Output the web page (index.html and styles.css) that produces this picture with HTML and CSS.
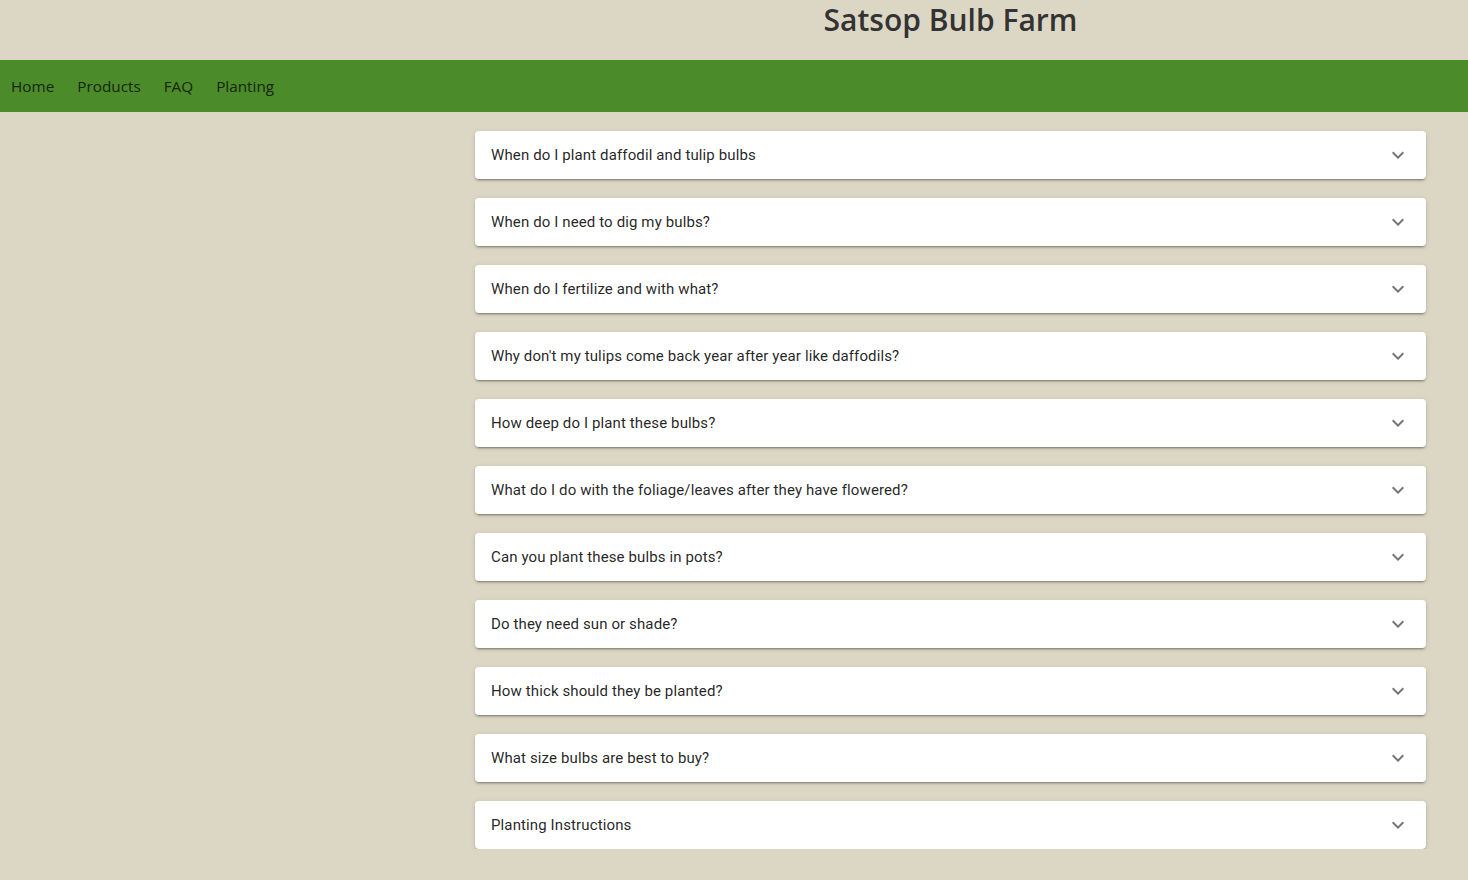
FILE: index.html
```html
<!DOCTYPE html>
<html lang="en">
<head>
<meta charset="utf-8">
<title>Satsop Bulb Farm - FAQ</title>
<link rel="stylesheet" href="styles.css">
</head>
<body>
<header class="site-header">
  <div class="header-spacer"></div>
  <h1 class="site-title">Satsop Bulb Farm</h1>
</header>
<nav class="main-nav">
  <a href="#" class="nav-link">Home</a>
  <a href="#" class="nav-link">Products</a>
  <a href="#" class="nav-link">FAQ</a>
  <a href="#" class="nav-link">Planting</a>
</nav>
<main class="layout">
  <aside class="sidebar"></aside>
  <section class="faq-list">
    <div class="panel"><span class="panel-title">When do I plant daffodil and tulip bulbs</span><svg class="chev" viewBox="0 0 24 24"><path d="M16.59 8.59L12 13.17 7.41 8.59 6 10l6 6 6-6z"/></svg></div>
    <div class="panel"><span class="panel-title">When do I need to dig my bulbs?</span><svg class="chev" viewBox="0 0 24 24"><path d="M16.59 8.59L12 13.17 7.41 8.59 6 10l6 6 6-6z"/></svg></div>
    <div class="panel"><span class="panel-title">When do I fertilize and with what?</span><svg class="chev" viewBox="0 0 24 24"><path d="M16.59 8.59L12 13.17 7.41 8.59 6 10l6 6 6-6z"/></svg></div>
    <div class="panel"><span class="panel-title">Why don't my tulips come back year after year like daffodils?</span><svg class="chev" viewBox="0 0 24 24"><path d="M16.59 8.59L12 13.17 7.41 8.59 6 10l6 6 6-6z"/></svg></div>
    <div class="panel"><span class="panel-title">How deep do I plant these bulbs?</span><svg class="chev" viewBox="0 0 24 24"><path d="M16.59 8.59L12 13.17 7.41 8.59 6 10l6 6 6-6z"/></svg></div>
    <div class="panel"><span class="panel-title">What do I do with the foliage/leaves after they have flowered?</span><svg class="chev" viewBox="0 0 24 24"><path d="M16.59 8.59L12 13.17 7.41 8.59 6 10l6 6 6-6z"/></svg></div>
    <div class="panel"><span class="panel-title">Can you plant these bulbs in pots?</span><svg class="chev" viewBox="0 0 24 24"><path d="M16.59 8.59L12 13.17 7.41 8.59 6 10l6 6 6-6z"/></svg></div>
    <div class="panel"><span class="panel-title">Do they need sun or shade?</span><svg class="chev" viewBox="0 0 24 24"><path d="M16.59 8.59L12 13.17 7.41 8.59 6 10l6 6 6-6z"/></svg></div>
    <div class="panel"><span class="panel-title">How thick should they be planted?</span><svg class="chev" viewBox="0 0 24 24"><path d="M16.59 8.59L12 13.17 7.41 8.59 6 10l6 6 6-6z"/></svg></div>
    <div class="panel"><span class="panel-title">What size bulbs are best to buy?</span><svg class="chev" viewBox="0 0 24 24"><path d="M16.59 8.59L12 13.17 7.41 8.59 6 10l6 6 6-6z"/></svg></div>
    <div class="panel"><span class="panel-title">Planting Instructions</span><svg class="chev" viewBox="0 0 24 24"><path d="M16.59 8.59L12 13.17 7.41 8.59 6 10l6 6 6-6z"/></svg></div>
  </section>
</main>
</body>
</html>
```
FILE: styles.css
```css
html, body {
  margin: 0;
  padding: 0;
}
body {
  background: #dcd7c5;
  font-family: "Open Sans", "Noto Sans", sans-serif;
  color: #333;
}
.site-header {
  display: grid;
  grid-template-columns: 475px 951px;
  height: 60px;
}
.site-title {
  margin: 0;
  text-align: center;
  font-family: "Open Sans", "Noto Sans", sans-serif;
  font-weight: 600;
  font-size: 30px;
  line-height: 40px;
  color: #333;
  letter-spacing: 0;
}
.main-nav {
  background: #4b8b29;
  height: 52px;
  display: flex;
  align-items: center;
}
.nav-link {
  font-family: "Open Sans", "Noto Sans", sans-serif;
  font-size: 15.3px;
  color: #17250e;
  text-decoration: none;
  padding: 0 11px;
  margin-right: 1px;
}
.layout {
  display: grid;
  grid-template-columns: 475px 951px;
  padding-top: 19px;
}
.faq-list {
  display: flex;
  flex-direction: column;
  gap: 19px;
}
.panel {
  background: #fff;
  height: 48px;
  border-radius: 4px;
  display: flex;
  align-items: center;
  justify-content: space-between;
  padding: 0 16px;
  box-shadow: 0 3px 1px -2px rgba(0,0,0,.2), 0 2px 2px 0 rgba(0,0,0,.14), 0 1px 5px 0 rgba(0,0,0,.12);
}
.panel-title {
  font-family: Roboto, "Liberation Sans", sans-serif;
  font-size: 15px;
  letter-spacing: 0.12px;
  color: rgba(0,0,0,.87);
}
.chev {
  width: 24px;
  height: 24px;
  fill: rgba(0,0,0,.54);
}
```
